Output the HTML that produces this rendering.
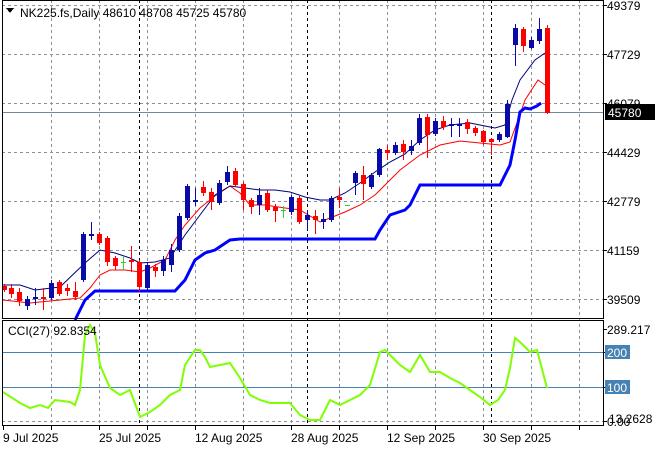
<!DOCTYPE html>
<html><head><meta charset="utf-8"><style>
html,body{margin:0;padding:0;background:#fff;width:660px;height:450px;overflow:hidden}
svg{display:block}
text{font-family:"Liberation Sans","DejaVu Sans",sans-serif;font-size:12px;fill:#000}
</style></head><body>
<svg id="s" width="660" height="450" xmlns="http://www.w3.org/2000/svg" shape-rendering="crispEdges">
<g id="grid" stroke="#8a939c" stroke-dasharray="3,3" stroke-width="1"></g>
<g stroke="#000" stroke-dasharray="3,3"><line x1="139.5" y1="0" x2="139.5" y2="425"/><line x1="307.5" y1="0" x2="307.5" y2="425"/><line x1="491.5" y1="0" x2="491.5" y2="425"/></g>
<line x1="2" y1="112.5" x2="603" y2="112.5" stroke="#778899"/>
<line x1="2" y1="352.5" x2="603" y2="352.5" stroke="#4682b4"/>
<line x1="2" y1="387.5" x2="603" y2="387.5" stroke="#4682b4"/>
<g id="lines" fill="none" shape-rendering="auto"></g>
<g id="candles"></g>
<polyline id="cci" fill="none" stroke="#7fff00" stroke-width="2" shape-rendering="auto"/>
<g fill="none" stroke="#000"><rect x="2.5" y="0.5" width="601" height="318"/><rect x="2.5" y="320.5" width="601" height="105"/></g>
<g id="ticks" stroke="#000"></g>
<path d="M6 8 L14 8 L10 13 Z" fill="#000"/>
<text x="20" y="17" fill="#000">NK225.fs,Daily  48610 48708 45725 45780</text>
<text x="607" y="10">49379</text>
<text x="607" y="59">47729</text>
<text x="607" y="108">46079</text>
<text x="607" y="157">44429</text>
<text x="607" y="206">42779</text>
<text x="607" y="255">41159</text>
<text x="607" y="304">39509</text>
<rect x="605" y="104" width="50" height="16" fill="#000"/>
<text x="608" y="117" style="fill:#fff">45780</text>
<text x="8" y="335">CCI(27) 92.8354</text>
<text x="607" y="334">289.217</text>
<rect x="605" y="345" width="25" height="14" fill="#4682b4"/>
<text x="607" y="357" style="fill:#fff">200</text>
<rect x="605" y="380" width="25" height="14" fill="#4682b4"/>
<text x="607" y="392" style="fill:#fff">100</text>
<text x="609" y="423">13.2628</text>
<text x="607" y="426">0.00</text>
<text x="3" y="442">9 Jul 2025</text>
<text x="99" y="442">25 Jul 2025</text>
<text x="195" y="442">12 Aug 2025</text>
<text x="291" y="442">28 Aug 2025</text>
<text x="387" y="442">12 Sep 2025</text>
<text x="483" y="442">30 Sep 2025</text>
</svg>
<script>
var NS="http://www.w3.org/2000/svg";
function el(p,t,a){var e=document.createElementNS(NS,t);for(var k in a)e.setAttribute(k,a[k]);p.appendChild(e);return e;}
var g=document.getElementById('grid');
[51,99,147,195,243,291,339,387,435,483,531,579].forEach(function(x){el(g,'line',{x1:x+.5,y1:0,x2:x+.5,y2:425});});
[5,54,103,152,201,250,299].forEach(function(y){el(g,'line',{x1:2,y1:y+.5,x2:603,y2:y+.5});});
el(g,'line',{x1:2,y1:421.5,x2:603,y2:421.5});
var t=document.getElementById('ticks');
[3,51,99,147,195,243,291,339,387,435,483,531,579].forEach(function(x){el(t,'line',{x1:x+.5,y1:425,x2:x+.5,y2:430});});
[5,54,103,152,201,250,299,329,352,387,421].forEach(function(y){el(t,'line',{x1:603,y1:y+.5,x2:607,y2:y+.5});});
var L=document.getElementById('lines');
function pl(pts,c,w){el(L,'polyline',{points:pts.map(function(p){return p.join(',')}).join(' '),stroke:c,'stroke-width':w});}
pl([[3,300],[30,303],[60,300],[80,298],[90,288],[100,275],[110,270],[125,270],[140,272],[150,268],[165,260],[175,240],[185,225],[200,208],[215,196],[230,186],[240,193],[250,205],[265,205],[285,208],[300,210],[320,222],[330,218],[345,212],[360,205],[375,195],[390,180],[400,170],[420,155],[440,145],[460,141],[480,143],[500,145],[510,142],[518,120],[525,100],[538,80],[545,85]],'#ff0000',1);
pl([[3,285],[20,285],[35,290],[60,287],[85,263],[100,250],[115,253],[130,258],[140,263],[155,262],[170,258],[185,235],[200,215],[215,195],[230,186],[245,188],[260,190],[275,190],[290,192],[305,197],[320,200],[330,200],[345,193],[360,183],[375,172],[390,162],[405,154],[420,140],[435,130],[450,125],[470,123],[485,126],[495,128],[505,125],[512,100],[520,80],[535,60],[545,53]],'#000080',1);
pl([[75,320],[85,300],[95,291],[175,291],[185,280],[195,260],[205,253],[215,250],[230,240],[240,239],[375,239],[380,230],[390,215],[405,210],[410,205],[420,185],[500,185],[505,175],[510,165],[515,140],[520,112],[525,108],[530,109],[537,106],[541,103]],'#0000ff',3);
var C=[[4,286,290,284,292,'r'],[11,288,294,284,298,'r'],[19,292,301,288,306,'r'],[27,299,306,296,310,'b'],[35,297,299,288,305,'b'],[43,297,299,288,310,'r'],[51,283,298,280,300,'b'],[59,282,294,280,296,'r'],[67,288,291,284,296,'r'],[75,291,297,282,300,'r'],[83,234,280,232,282,'b'],[91,234,236,222,240,'b'],[99,234,243,232,245,'r'],[107,238,262,236,266,'r'],[115,258,266,256,270,'r'],[123,262,263,256,270,'g'],[131,260,262,246,272,'r'],[139,262,287,260,292,'r'],[147,265,288,262,292,'b'],[155,267,271,264,277,'r'],[163,260,271,256,276,'b'],[171,250,265,244,272,'b'],[179,216,250,213,252,'b'],[187,186,218,184,220,'b'],[195,200,202,188,206,'b'],[203,187,193,181,196,'r'],[211,192,202,188,210,'r'],[219,183,203,180,205,'b'],[227,172,182,166,185,'b'],[235,171,185,168,186,'r'],[243,184,200,182,210,'r'],[251,200,207,198,214,'r'],[259,195,205,188,215,'b'],[267,193,210,190,212,'r'],[275,207,211,204,222,'r'],[283,210,211,206,218,'g'],[291,197,212,195,215,'b'],[299,198,222,196,224,'r'],[307,215,220,210,230,'b'],[315,216,220,210,234,'r'],[323,219,222,213,229,'b'],[331,198,220,196,222,'b'],[339,197,200,188,208,'r'],[347,205,206,205,206,'g'],[355,173,183,171,195,'b'],[363,175,184,166,200,'r'],[371,175,187,173,189,'b'],[379,149,175,148,177,'b'],[387,150,153,145,160,'r'],[395,145,153,142,155,'b'],[403,144,152,140,160,'r'],[411,146,151,140,155,'b'],[419,118,143,114,145,'b'],[427,117,135,114,158,'r'],[435,121,134,118,136,'b'],[443,121,127,116,130,'r'],[451,124,126,118,137,'b'],[459,124,126,118,137,'b'],[467,122,129,119,134,'r'],[475,128,133,126,136,'r'],[483,131,142,130,145,'r'],[491,139,142,138,155,'r'],[499,134,140,132,142,'b'],[507,104,137,100,138,'b'],[515,28,45,24,66,'b'],[523,29,46,27,52,'r'],[531,40,48,37,49,'b'],[539,29,41,18,44,'b'],[547,28,113,25,114,'r']];
var cg=document.getElementById('candles');
C.forEach(function(c){var col=c[5]=='r'?'#ff0000':c[5]=='b'?'#0a0aa8':'#32cd32';
el(cg,'rect',{x:c[0],y:c[3],width:1,height:c[4]-c[3],fill:col});
el(cg,'rect',{x:c[0]-2,y:c[1],width:5,height:Math.max(1,c[2]-c[1]),fill:col});});
var P=[[3,392],[20,403],[30,408],[40,405],[48,408],[55,400],[70,402],[75,405],[80,390],[85,335],[90,325],[95,333],[100,365],[110,388],[120,395],[130,390],[140,417],[150,412],[160,405],[170,395],[180,390],[185,365],[195,350],[200,350],[205,357],[210,367],[220,365],[230,363],[240,378],[250,395],[260,400],[270,403],[290,403],[300,415],[310,420],[320,420],[330,400],[340,405],[350,400],[360,395],[370,385],[380,352],[385,350],[390,355],[400,365],[410,372],[420,355],[430,372],[440,372],[450,378],[460,383],[470,390],[480,397],[490,405],[498,400],[505,390],[510,368],[515,338],[520,342],[530,352],[537,350],[547,388]];
document.getElementById('cci').setAttribute('points',P.map(function(p){return p.join(',')}).join(' '));
</script>
</body></html>
